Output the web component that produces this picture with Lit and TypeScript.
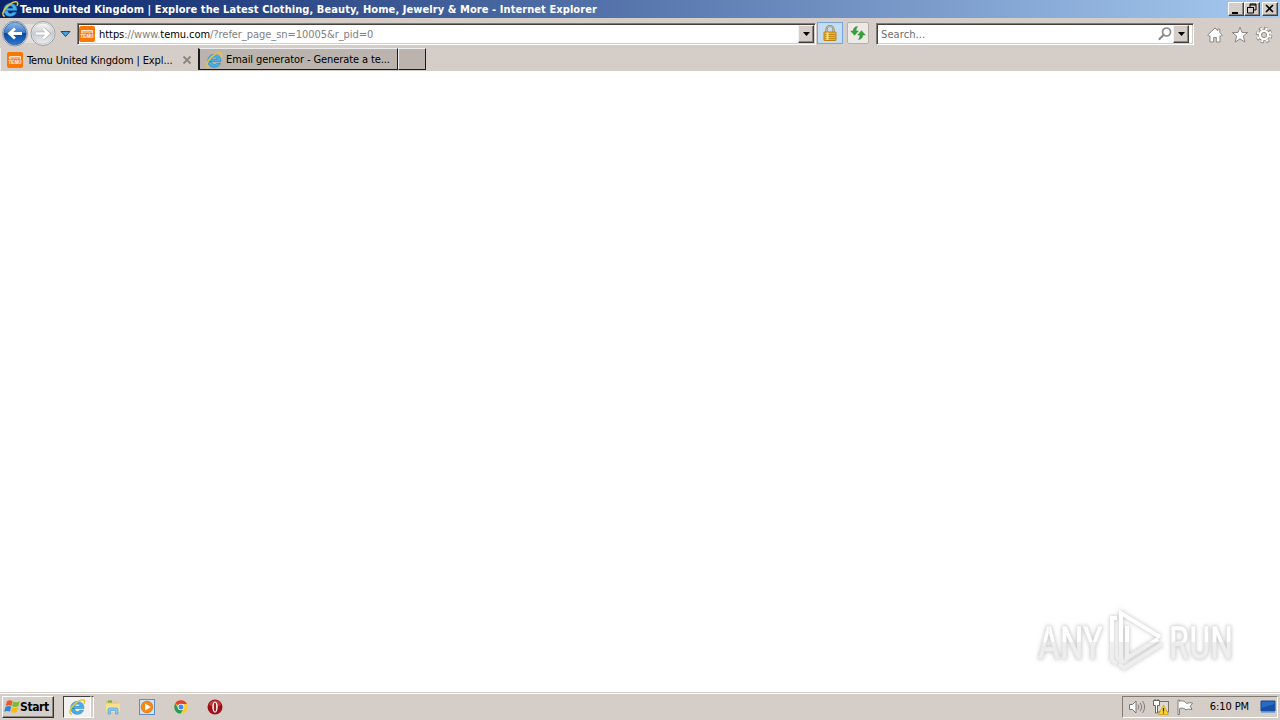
import { LitElement, css, html, svg } from 'lit'
import { customElement, property } from 'lit/decorators.js'

const ieLogo = svg`
   <path d="M2.300 9.600h12.600c.4-4.200-2.300-7.200-6.500-7.200-3.900 0-6.700 2.700-6.700 6.500s2.800 6.400 6.700 6.400c2.900 0 5.200-1.300 6.100-4h-3.800c-.5.900-1.300 1.300-2.300 1.300-1.600 0-2.700-1.100-2.700-3zM5.800 7.300c.3-1.400 1.300-2.200 2.600-2.200s2.400.8 2.600 2.200z" fill="#45b0e8" stroke="#1c7dc2" stroke-width=".5"/>
   <path d="M2.900 15.200C-.6 14.700.6 9.700 5 5.600 8.800 1.800 13.700-.4 15.200 1.200c.8.800.5 2.300-.2 3.700" fill="none" stroke="#e9c437" stroke-width="1.500"/>`

/**
 * 16x16 based icon, drawn at any size
 * @attr {String} name - Icon name
 */
@customElement('ie-icon')
export class Icon extends LitElement {

   static get styles() {
      return css`
         :host { display: block; width: 16px; height: 16px; flex: none; }
         svg { display: block; width: 100%; height: 100%; overflow: visible; }
         .brand { font: bold 4.500px 'Liberation Sans', sans-serif; fill: #fff; }
      `
   }

   @property() name = ''

   shape() {
      switch (this.name) {
         case 'ie': return ieLogo
         case 'temu': return svg`
            <rect width="16" height="16" rx="2" fill="#fb7701"/>
            <path d="M2.500 5h1.500v2h-1.500zM6 4.500v3M7.500 5h.5v2M10 4.500v3M12 5v2M13.500 4.500v3M2.500 4.500h11" fill="none" stroke="#ffe3cc" stroke-width="1"/>
            <text class="brand" x="1.500" y="12.200" textLength="13">TEMU</text>`
         case 'lock': return svg`
            <path d="M4.500 8V4.500a3.500 3.500 0 0 1 7 0V8" fill="none" stroke="#8c8573" stroke-width="2.200"/>
            <path d="M4.500 8V4.500a3.500 3.500 0 0 1 7 0V8" fill="none" stroke="#d4cbb0" stroke-width=".8"/>
            <rect x="2" y="7" width="12" height="8.500" rx=".5" fill="#eab52b" stroke="#b97e13"/>
            <path d="M2.500 9.500h11M2.500 11.500h11M2.500 13.500h11" stroke="#c68d18"/>
            <path d="M5.500 7.500v7.500" stroke="#fae184" stroke-width="2"/>`
         case 'refresh': return svg`
            <path d="M7.500 1.500C4.500 1.800 3.300 3.700 3.300 6H.8L4.500 10.300 8.300 6H6c0-1.700.4-3 1.500-4.500z" fill="#35a438" stroke="#26822a" stroke-width=".5"/>
            <path d="M8.500 14.500c3-.3 4.200-2.200 4.200-4.500h2.500L11.500 5.700 7.700 10H10c0 1.700-.4 3-1.500 4.500z" fill="#35a438" stroke="#26822a" stroke-width=".5"/>`
         case 'search': return svg`
            <circle cx="9.500" cy="6" r="4" fill="#fff" stroke="#8a8a8a" stroke-width="1.700"/>
            <path d="M6.500 9 2.500 13" stroke="#8a8a8a" stroke-width="2.200" stroke-linecap="round"/>`
         case 'home': return svg`
            <path d="M8 1 .7 8l1.400 1.500.9-.8V15h3.700v-4.500h2.600V15H13V8.700l.9.800L15.300 8 12.800 5.600V2h-2v1.700z" fill="#fff" stroke="#8b8680" stroke-width="1"/>`
         case 'star': return svg`
            <path d="m8 .3 2.100 5.200h5.600l-4.400 3.600 1.600 6L8 11.800l-4.900 3.300 1.600-6L.3 5.500h5.600z" fill="#fff" stroke="#8b8680" stroke-width="1"/>`
         case 'gear': return svg`
            <circle cx="8" cy="8" r="6.600" fill="none" stroke="#8b8680" stroke-width="3.400" stroke-dasharray="3 2.180"/>
            <circle cx="8" cy="8" r="5.900" fill="#8b8680"/>
            <circle cx="8" cy="8" r="6.400" fill="none" stroke="#fff" stroke-width="2.300" stroke-dasharray="2 3.026" stroke-dashoffset="-.5"/>
            <circle cx="8" cy="8" r="4" fill="#d5cec8" stroke="#fff" stroke-width="2.500"/>
            <circle cx="8" cy="8" r="2.600" fill="none" stroke="#8b8680" stroke-width=".9"/>`
         case 'windows': return svg`
            <path d="M3 2.200C5 1 6.800 1.200 8.600 2.200L7.400 7C5.700 6.100 4 6 1.700 7.100z" fill="#ed5a24"/>
            <path d="M9.300 2.600c2 1 4.200.9 6.400-.3l-1.300 4.800c-2.100 1.100-4.200 1.200-6.300.2z" fill="#7fba2c"/>
            <path d="M1.500 7.900C3.600 6.800 5.400 6.900 7.200 7.800L6 12.600C4.200 11.700 2.400 11.600.2 12.700z" fill="#2b88d8"/>
            <path d="M7.900 8.200c2 1 4.100.9 6.300-.2l-1.300 4.800c-2.100 1.100-4.100 1.200-6.200.2z" fill="#fbba16"/>`
         case 'explorer': return svg`
            <path d="M1 2h5l1 1.500h7V13H1z" fill="#e8bf59"/>
            <path d="M3 1.500h4v2H3z" fill="#58b84c"/>
            <path d="M1 4.500h14V13H1z" fill="#f7e08f"/>
            <path d="M3 15v-4.500q0-1.500 1.500-1.500h7q1.500 0 1.500 1.500V15h-2.500v-3.500h-5V15z" fill="#83c9ef" stroke="#4c9ed1" stroke-width=".6"/>`
         case 'player': return svg`
            <rect x=".5" y=".5" width="15" height="15" fill="#cde4f7" stroke="#5b8fc6"/>
            <circle cx="8" cy="8" r="5.900" fill="#f58b16" stroke="#d96b05" stroke-width=".6"/>
            <path d="M6.200 4.400v7.200L11.800 8z" fill="#fff"/>`
         case 'chrome': return svg`
            <circle cx="8" cy="8" r="6.700" fill="#fcc934"/>
            <path d="M8 8 2.200 4.600A6.700 6.700 0 0 1 13.900 5H8z" fill="#e43e2f"/>
            <path d="M2.200 4.600A6.700 6.700 0 0 0 7.500 14.700L10.700 9.500 8 8 5.400 9.500z" fill="#279c50"/>
            <circle cx="8" cy="8" r="3.300" fill="#fff"/>
            <circle cx="8" cy="8" r="2.500" fill="#4286ee"/>`
         case 'opera': return svg`
            <circle cx="8" cy="8" r="7.500" fill="#9c1317"/>
            <path d="M2 6a6.300 6.300 0 0 1 12 0q-6 3-12 0" fill="#c5393b"/>
            <ellipse cx="8" cy="8" rx="2.700" ry="5.500" fill="#fff"/>
            <ellipse cx="8" cy="8" rx="1.200" ry="4.600" fill="#a41a1d"/>`
         case 'volume': return svg`
            <path d="M.5 5.500h3L7 2v12l-3.500-3.500h-3z" fill="#fff" stroke="#6e6a65" stroke-width=".9"/>
            <path d="M9 5.500q1.700 2.500 0 5M11.300 3.700q3 4.300 0 8.600M13.500 2q4.300 6 0 12" fill="none" stroke="#77736e" stroke-width=".9"/>`
         case 'network': return svg`
            <rect x="4.500" y="2.500" width="11" height="10.500" fill="#ddd9d4" stroke="#77726c"/>
            <path d="M.5 1.500h6v5h-2V14h-2V6.500h-2z" fill="#fff" stroke="#5d5954" stroke-width=".9"/>
            <path d="M2 0v2M5 0v2" stroke="#5d5954"/>
            <path d="m10.500 6 5 9.500h-10z" fill="#ffd32b" stroke="#c5951a" stroke-width=".7"/>
            <path d="M10.500 9v3.500m0 1v1" stroke="#312503" stroke-width="1.200"/>`
         case 'flag': return svg`
            <path d="M1 1v14.500h1.500V9.700c2-1 3.500-.7 5.500.3l.8 1c2-1 3.700-1 6.200-.5l-1.700-3.300L15.500 4c-2-.5-4-.2-6 .5C7.500 1.700 5 1.500 2.500 2.300V1z" fill="#fff" stroke="#77736e" stroke-width=".9"/>`
         case 'desktop': return svg`
            <path d="M1 2h14v10H1z" fill="#286bc4" stroke="#17468d"/>
            <path d="M1.500 9 14.500 5v6.500h-13z" fill="#164fa4"/>
            <path d="M1 13.500h14" stroke="#83a9d6"/>`
      }
      return svg``
   }

   render() {
      return html`<svg viewBox="0 0 16 16">${this.shape()}</svg>`
   }
}

@customElement('app-root')
export class BrowserDesktop extends LitElement {

   static get styles() {
      return css`
         * { box-sizing: border-box; }

         :host {
            display: flex;
            flex-direction: column;
            width: 1280px;
            height: 720px;
            overflow: hidden;
            background: #fff;
            color: #000;
            font: 11px/14px 'DejaVu Sans Condensed', 'DejaVu Sans', sans-serif;
            font-stretch: condensed;
            white-space: nowrap;
         }

         svg { display: block; overflow: visible; }

         /* Title bar */
         .title {
            display: flex;
            align-items: center;
            flex: none;
            height: 18px;
            padding: 0 2px;
            background: linear-gradient(90deg, #0a246a, #a6caf0);
            color: #fff;
            font-weight: bold;
         }
         .title-text { margin-left: 2px; flex: 1; padding-top: 1px; letter-spacing: .076px; }
         .window-buttons { display: flex; }
         .button {
            width: 16px;
            height: 14px;
            background: #d5cec8;
            border: 1px solid;
            border-color: #fff #404040 #404040 #fff;
            box-shadow: inset -1px -1px #8c8782;
         }
         .button.close { margin-left: 2px; }

         /* Navigation */
         .toolbar {
            display: flex;
            flex: none;
            height: 30px;
            padding: 4px 8px 0 2px;
            background: #d5cec8;
         }
         .nav { display: flex; width: 75px; margin-top: -3px; flex: none; }
         .field {
            display: flex;
            align-items: center;
            height: 22px;
            background: #fff;
            border: 1px solid;
            border-color: #817b76 #fff #fff #817b76;
            box-shadow: inset 1px 1px #46413e, inset -1px -1px #d5cec8;
         }
         .address { width: 739px; padding: 0 1px; margin-top: 1px; }
         .url { flex: 1; margin-left: 4px; padding-top: 1px; color: #808080; letter-spacing: -.05px; }
         .url b { color: #000; font-weight: normal; }
         .drop {
            display: flex;
            align-items: center;
            justify-content: center;
            width: 16px;
            height: 18px;
            background: #d5cec8;
            border: 1px solid;
            border-color: #f5f2ee #404040 #404040 #f5f2ee;
            box-shadow: inset -1px -1px #8c8782;
         }
         .tool { display: flex; align-items: center; justify-content: center; height: 22px; }
         .security { width: 26px; margin-left: 1px; background: #c6dcf3; border: 1px solid #76a6df; }
         .reload { width: 22px; margin-left: 4px; background: #ece9e6; border: 1px solid #b6b0aa; border-radius: 2px; }
         .search { width: 318px; margin: 1px 0 0 7px; padding: 0 4px; color: #6d6d6d; }
         .search-text { flex: 1; padding-top: 1px; letter-spacing: .1px; }
         .actions { display: flex; align-items: center; gap: 8.500px; height: 26px; margin-left: 13px; }

         /* Tabs */
         .tabs {
            display: flex;
            flex: none;
            height: 23px;
            background: #d5cec8;
         }
         .tab { display: flex; align-items: center; height: 22px; }
         .tab.active { width: 198px; padding: 1px 6px 0 6px; height: 23px; border-left: 1px solid #eee; }
         .tab.active .label { letter-spacing: -.12px; }
         .tab.other { width: 200px; padding: 1px 0 0 6px; background: #bbb4ae; border: 1px solid #1e1c1a; border-top-color: #eee; border-left-width: 2px; }
         .tab.other .label { letter-spacing: -.1px; }
         .tab.new { width: 28px; background: #bbb4ae; border: 1px solid #1e1c1a; border-top-color: #eee; border-left-color: #eee; }
         .label { flex: 1; margin-left: 4px; padding-top: 1px; }

         /* Page */
         .page { flex: 1; background: #fff; position: relative; }
         .watermark { position: absolute; left: 1030px; top: 531px; filter: drop-shadow(0 0 2px #bbb); }
         .watermark text { font: 500 47px Roboto, sans-serif; fill: url(#shine); stroke: #e5e5e5; stroke-width: .4; }

         /* Taskbar */
         .taskbar {
            display: flex;
            align-items: center;
            flex: none;
            height: 28px;
            padding: 1px 2px 0;
            background: #d5cec8;
            border-top: 1px solid #d5cec8;
            box-shadow: inset 0 1px #fff;
         }
         .start {
            display: flex;
            align-items: center;
            width: 52px;
            height: 22px;
            padding-left: 1px;
            border: 1px solid;
            border-color: #fff #303030 #303030 #fff;
            box-shadow: inset -1px -1px #8c8782;
            font-weight: bold;
            font-size: 12px;
            letter-spacing: -.4px;
         }
         .running {
            display: flex;
            align-items: center;
            justify-content: center;
            width: 28px;
            height: 22px;
            margin-left: 9px;
            background: #f4f1ee;
            border: 1px solid;
            border-color: #404040 #fff #fff #404040;
         }
         .running-stack { width: 3px; height: 22px; border: 1px solid; border-color: #404040 #fff #fff #d5cec8; }
         .pinned { display: flex; gap: 18px; margin-left: 11px; flex: 1; }
         .tray {
            display: flex;
            align-items: center;
            width: 156px;
            height: 22px;
            padding: 0 1px 0 6px;
            border: 1px solid;
            border-color: #827c76 #fff #fff #827c76;
         }
         .tray-icons { display: flex; gap: 8px; flex: 1; }
         .clock { margin-right: 11px; letter-spacing: -.1px; }
      `
   }

   arrow() {
      return html`<svg width="7" height="4"><path d="M0 0h7L3.500 4z"/></svg>`
   }

   renderTitle() {
      return html`
         <div class="title">
            <ie-icon name="ie"></ie-icon>
            <span class="title-text">Temu United Kingdom | Explore the Latest Clothing, Beauty, Home, Jewelry &amp; More - Internet Explorer</span>
            <div class="window-buttons">
               <div class="button"><svg width="14" height="12"><path d="M3 9h6v2H3z"/></svg></div>
               <div class="button"><svg width="14" height="12"><path d="M5 2h6M5 1h6v6H9M5 1v3M2.500 4.500h6M2.500 4v6h6V4" fill="none" stroke="#000"/></svg></div>
               <div class="button close"><svg width="14" height="12"><path d="m3 2 7 7m0-7L3 9" stroke="#000" stroke-width="1.600"/></svg></div>
            </div>
         </div>
      `
   }

   renderToolbar() {
      return html`
         <div class="toolbar">
            <div class="nav">
               <svg width="75" height="29">
                  <defs>
                     <linearGradient id="back" x2="0" y2="1"><stop stop-color="#91b9e8"/><stop offset=".48" stop-color="#3977c5"/><stop offset=".5" stop-color="#0e469d"/><stop offset="1" stop-color="#287bd4"/></linearGradient>
                     <linearGradient id="forward" x2="0" y2="1"><stop stop-color="#fafafa"/><stop offset=".5" stop-color="#cbcccf"/><stop offset="1" stop-color="#eceef1"/></linearGradient>
                  </defs>
                  <rect x="12" y="5" width="29" height="19" fill="#e3dfdc"/>
                  <circle cx="13" cy="14.500" r="12.500" fill="#f2f3f5" stroke="#8d96a6"/>
                  <circle cx="13" cy="14.500" r="11.300" fill="url(#back)" stroke="#2a5796" stroke-width=".7"/>
                  <path d="M20 14.500H8m5-5-5.500 5 5.500 5" fill="none" stroke="#fff" stroke-width="2.800"/>
                  <circle cx="41" cy="14.500" r="12" fill="#f2f3f5" stroke="#9b9da1"/>
                  <circle cx="41" cy="14.500" r="10.500" fill="url(#forward)" stroke="#b1b4b8" stroke-width=".6"/>
                  <path d="M34 14.500h12m-5-5 5.500 5-5.500 5" fill="none" stroke="#a1a4a9" stroke-width="3.600"/>
                  <path d="M34 14.500h12m-5-5 5.500 5-5.500 5" fill="none" stroke="#fff" stroke-width="2.500"/>
                  <path d="M59 12.500h9l-4.500 5z" fill="#47a3dc" stroke="#174a7d"/>
               </svg>
            </div>
            <div class="field address">
               <ie-icon name="temu"></ie-icon>
               <span class="url"><b>https</b>://www.<b>temu.com</b>/?refer_page_sn=10005&amp;r_pid=0</span>
               <div class="drop">${this.arrow()}</div>
            </div>
            <div class="tool security"><ie-icon name="lock"></ie-icon></div>
            <div class="tool reload"><ie-icon name="refresh"></ie-icon></div>
            <div class="field search">
               <span class="search-text">Search...</span>
               <ie-icon name="search"></ie-icon>
               <div class="drop">${this.arrow()}</div>
            </div>
            <div class="actions">
               ${['home', 'star', 'gear'].map(name => html`<ie-icon name="${name}"></ie-icon>`)}
            </div>
         </div>
      `
   }

   renderTabs() {
      return html`
         <div class="tabs">
            <div class="tab active">
               <ie-icon name="temu"></ie-icon>
               <span class="label">Temu United Kingdom | Expl...</span>
               <svg width="10" height="10"><path d="m1.500 1.500 7 7m0-7-7 7" stroke="#8b8680" stroke-width="1.800"/></svg>
            </div>
            <div class="tab other">
               <ie-icon name="ie"></ie-icon>
               <span class="label">Email generator - Generate a te...</span>
            </div>
            <div class="tab new"></div>
         </div>
      `
   }

   renderWatermark() {
      return html`
         <svg class="watermark" width="210" height="76" viewBox="1030 602 210 76">
            <defs>
               <linearGradient id="shine" gradientUnits="userSpaceOnUse" x1="0" y1="602" x2="0" y2="678">
                  <stop offset=".53" stop-color="#fff"/><stop offset=".53" stop-color="#eee"/>
               </linearGradient>
            </defs>
            <text x="1038" y="659" textLength="65" lengthAdjust="spacingAndGlyphs">ANY</text>
            <text x="1169" y="659" textLength="64" lengthAdjust="spacingAndGlyphs">RUN</text>
            <path d="M1117 618h-5v42l5 4M1121 659v-46l39 24M1127 626v32l31-19M1119 664l5 4 38-24" fill="none" stroke="url(#shine)" stroke-width="4"/>
         </svg>
      `
   }

   renderTaskbar() {
      return html`
         <div class="taskbar">
            <div class="start"><ie-icon name="windows"></ie-icon>Start</div>
            <div class="running"><ie-icon name="ie"></ie-icon></div>
            <div class="running-stack"></div>
            <div class="pinned">
               ${['explorer', 'player', 'chrome', 'opera'].map(name => html`<ie-icon name="${name}"></ie-icon>`)}
            </div>
            <div class="tray">
               <div class="tray-icons">
                  ${['volume', 'network', 'flag'].map(name => html`<ie-icon name="${name}"></ie-icon>`)}
               </div>
               <span class="clock">6:10 PM</span>
               <ie-icon name="desktop"></ie-icon>
            </div>
         </div>
      `
   }

   render() {
      return html`
         ${this.renderTitle()}
         ${this.renderToolbar()}
         ${this.renderTabs()}
         <div class="page">${this.renderWatermark()}</div>
         ${this.renderTaskbar()}
      `
   }
}
